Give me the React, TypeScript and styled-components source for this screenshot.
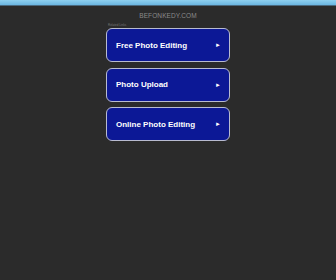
import React from "react";
import styled, { createGlobalStyle } from "styled-components";

const GlobalStyle = createGlobalStyle`
    html, body {
        margin: 0;
        padding: 0;
        background: #2b2b2b;
    }
    body {
        font-family: "Liberation Sans", Arial, sans-serif;
    }
`;

const Page = styled.div`
    width: 336px;
    height: 280px;
    background: #2b2b2b;
    display: flex;
    flex-direction: column;
    align-items: center;
    overflow: hidden;
`;

const TopBar = styled.div`
    align-self: stretch;
    height: 5px;
    background: linear-gradient(to bottom, #8fd0f0, #6bb6e2);
    border-bottom: 1px solid #4a6a80;
`;

const Domain = styled.div`
    margin-top: 6px;
    font-size: 6.5px;
    color: #8a8a8a;
    letter-spacing: 0.1px;
    text-transform: uppercase;
`;

const Links = styled.div`
    width: 124px;
    margin-top: 4px;
    display: flex;
    flex-direction: column;
`;

const Label = styled.div`
    height: 5px;
    font-size: 3px;
    color: #777;
    padding-left: 2px;
`;

const List = styled.div`
    display: flex;
    flex-direction: column;
    gap: 5.5px;
`;

const LinkButton = styled.a`
    height: 34px;
    box-sizing: border-box;
    display: flex;
    align-items: center;
    justify-content: space-between;
    padding: 0 8px 0 9px;
    background: #0c1896;
    border: 1.5px solid #b8bbd0;
    border-radius: 6px;
    color: #ffffff;
    font-size: 8px;
    font-weight: bold;
    letter-spacing: 0;
    text-decoration: none;
`;

const Arrow = styled.span`
    font-size: 6px;
    color: #ffffff;
`;

const items = ["Free Photo Editing", "Photo Upload", "Online Photo Editing"];

export default function App() {
    return (
        <>
            <GlobalStyle />
            <Page>
                <TopBar />
                <Domain>befonkedy.com</Domain>
                <Links>
                    <Label>Related Links</Label>
                    <List>
                        {items.map((text) => (
                            <LinkButton key={text} href="#">
                                {text}
                                <Arrow>►</Arrow>
                            </LinkButton>
                        ))}
                    </List>
                </Links>
            </Page>
        </>
    );
}
